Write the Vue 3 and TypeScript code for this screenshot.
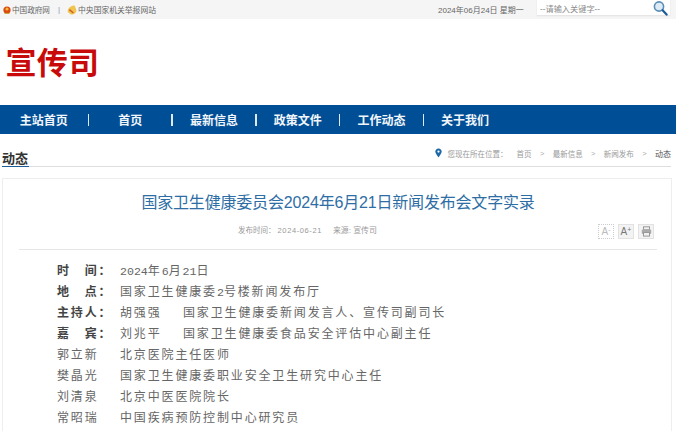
<script setup lang="ts">
const navItems: string[] = ['主站首页', '首页', '最新信息', '政策文件', '工作动态', '关于我们']
const crumbs: string[] = ['首页', '最新信息', '新闻发布']
interface Row { label: string; bold: boolean; value: string; extra?: string }
const rows: Row[] = [
  { label: '时　间：', bold: true, value: '2024年6月21日' },
  { label: '地　点：', bold: true, value: '国家卫生健康委2号楼新闻发布厅' },
  { label: '主持人：', bold: true, value: '胡强强', extra: '国家卫生健康委新闻发言人、宣传司副司长' },
  { label: '嘉　宾：', bold: true, value: '刘兆平', extra: '国家卫生健康委食品安全评估中心副主任' },
  { label: '郭立新', bold: false, value: '北京医院主任医师' },
  { label: '樊晶光', bold: false, value: '国家卫生健康委职业安全卫生研究中心主任' },
  { label: '刘清泉', bold: false, value: '北京中医医院院长' },
  { label: '常昭瑞', bold: false, value: '中国疾病预防控制中心研究员' },
]
const split = (s: string): string[] => s.match(/\d+|\D+/g) ?? []
const isNum = (s: string): boolean => /^\d/.test(s)
</script>

<template>
  <div class="page">
    <header class="topbar">
      <div class="top-links">
        <svg class="emblem" width="8" height="10" viewBox="0 0 8 10"><circle cx="4" cy="5" r="3.6" fill="#d9480f" /><circle cx="4" cy="4" r="1.6" fill="#f5b63c" /><path d="M1.5 8.4 H6.5" stroke="#c8a030" stroke-width="1" /></svg>
        <a class="top-link">中国政府网</a>
        <span class="top-sep">|</span>
        <svg class="emblem2" width="10" height="10" viewBox="0 0 10 10"><path d="M0.6 7 C0.6 3 4 0.6 7.6 0.6 L9.4 5 C9.4 8 7 9.6 4 9.6 Z" fill="#efc44f" /><path d="M2.4 4.6 L6.4 8" stroke="#cf5a2a" stroke-width="1.4" /></svg>
        <a class="top-link wide">中央国家机关举报网站</a>
      </div>
      <div class="top-right">
        <span class="date">2024年06月24日 星期一</span>
        <div class="search">
          <span class="placeholder">--请输入关键字--</span>
          <svg width="15" height="16" viewBox="0 0 15 16"><circle cx="6" cy="6.5" r="4.6" fill="#dcebf5" stroke="#5b8db5" stroke-width="1.6" /><path d="M9.6 10.2 L13.6 14.6" stroke="#1d5c94" stroke-width="2.2" stroke-linecap="round" /></svg>
        </div>
      </div>
    </header>

    <div class="brand"><h1>宣传司</h1></div>

    <nav class="nav">
      <template v-for="(item, i) in navItems" :key="item">
        <a class="nav-item" :class="{ first: i === 0 }">{{ item }}</a>
        <span v-if="i < navItems.length - 1" class="nav-sep"></span>
      </template>
    </nav>

    <div class="section-head">
      <h2>动态</h2>
      <div class="crumbs">
        <svg width="7" height="10" viewBox="0 0 8 11"><path d="M4 0.4 C1.8 0.4 0.4 2 0.4 3.9 C0.4 6.4 4 10.6 4 10.6 C4 10.6 7.6 6.4 7.6 3.9 C7.6 2 6.2 0.4 4 0.4 Z" fill="#1d69a8" /><circle cx="4" cy="3.8" r="1.3" fill="#fff" /></svg>
        <span class="crumb-lead">您现在所在位置：</span>
        <template v-for="c in crumbs" :key="c">
          <span class="crumb">{{ c }}</span>
          <span class="crumb-arrow">&gt;</span>
        </template>
        <span class="crumb current">动态</span>
      </div>
    </div>

    <main class="card">
      <h3 class="title">国家卫生健康委员会2024年6月21日新闻发布会文字实录</h3>
      <div class="meta-row">
        <div class="meta">
          <span>发布时间： <span class="meta-date">2024-06-21</span></span>
          <span class="meta-source">来源: 宣传司</span>
        </div>
        <div class="tools">
          <span class="tool off">A<sup>-</sup></span>
          <span class="tool">A<sup>+</sup></span>
          <span class="tool">
            <svg width="11" height="11" viewBox="0 0 11 11"><rect x="2.5" y="0.8" width="6" height="3" fill="none" stroke="#999" /><rect x="0.8" y="3.5" width="9.4" height="4.6" rx="1" fill="#aaa" /><rect x="2.5" y="6.5" width="6" height="3.6" fill="#f1f1f1" stroke="#999" /></svg>
          </span>
        </div>
      </div>
      <div class="content">
        <p v-for="r in rows" :key="r.label" class="row">
          <span class="label" :class="{ bold: r.bold }">{{ r.label }}</span>
          <span class="value"><span v-for="(s, i) in split(r.value)" :key="i" :class="{ num: isNum(s) }">{{ s }}</span></span>
          <span v-if="r.extra" class="extra">{{ r.extra }}</span>
        </p>
      </div>
    </main>
  </div>
</template>

<style>
html, body { margin: 0; overflow: hidden; background: #fff; }
</style>

<style scoped>
.page {
  width: 676px;
  height: 431px;
  overflow: hidden;
  font-family: "Liberation Sans", "Noto Sans CJK SC", sans-serif;
  color: #555;
}
.topbar {
  height: 19px;
  background: #f5f5f5;
  display: flex;
  justify-content: space-between;
  align-items: center;
}
.top-links { display: flex; align-items: center; padding-left: 3px; }
.emblem { margin-right: 1px; }
.top-link { font-size: 7.6px; color: #666; }
.top-link.wide { font-size: 7.8px; }
.top-sep { font-size: 8px; color: #8a9bb0; margin: 0 8px 0 8px; }
.emblem2 { margin: 0 1px 0 -1px; }
.top-right { display: flex; align-items: center; height: 100%; padding-right: 6px; }
.date { font-size: 8px; color: #666; width: 99px; }
.search {
  width: 133px;
  height: 16px;
  margin-bottom: 3px;
  box-sizing: border-box;
  background: #fff;
  border-bottom: 1px solid #e6e6e6;
  box-shadow: 0 0 1px #ddd;
  display: flex;
  align-items: center;
  justify-content: space-between;
  padding: 0 2px 0 3px;
}
.placeholder { font-size: 8.2px; color: #8c8c8c; }
.brand { height: 86px; box-sizing: border-box; padding: 27px 0 0 5.5px; }
.brand h1 {
  margin: 0;
  font-size: 31px;
  line-height: 36px;
  font-weight: 700;
  color: #c80a0a;
  letter-spacing: 0.3px;
}
.nav {
  height: 29px;
  background: #004f96;
  display: flex;
  align-items: center;
  padding-left: 5.6px;
}
.nav-item {
  width: 82.2px;
  box-sizing: border-box;
  text-align: center;
  font-size: 12px;
  font-weight: 700;
  color: #f2f6fa;
  flex: none;
}
.nav-item.first { padding-right: 6px; }
.nav-sep {
  width: 1.5px;
  height: 12px;
  background: #dfe9f2;
  flex: none;
}
.section-head {
  height: 33px;
  box-sizing: border-box;
  margin: 0 5px 0 2px;
  border-bottom: 1px solid #dedede;
  display: flex;
  justify-content: space-between;
  align-items: flex-end;
}
.section-head h2 {
  margin: 0 0 -1px;
  height: 16px;
  line-height: 15px;
  box-sizing: border-box;
  font-size: 13px;
  font-weight: 700;
  color: #333;
  border-bottom: 1px solid #1d5c94;
  width: 27px;
}
.crumbs {
  display: flex;
  align-items: center;
  height: 26px;
  font-size: 7.5px;
  color: #9a9a9a;
  margin-bottom: 0;
}
.crumb-lead { margin-left: 5px; margin-right: 9px; font-size: 7.5px; letter-spacing: 0; }
.crumb { white-space: nowrap; }
.crumb-arrow { margin: 0 8.4px 0 8.4px; color: #aaa; }
.crumb.current { color: #555; font-size: 8px; }
.card {
  margin: 11px 4px 0 2px;
  border: 1px solid #eee;
  border-bottom: none;
  padding: 0 14px 0 16px;
  height: 300px;
}
.title {
  margin: 0;
  padding-top: 14px;
  font-size: 16px;
  line-height: 20px;
  font-weight: 400;
  text-align: center;
  color: #2e6ea5;
  letter-spacing: -0.18px;
}
.meta-row {
  margin-top: 11px;
  height: 26px;
  box-sizing: border-box;
  border-bottom: 1px solid #e6e6e6;
  display: flex;
  position: relative;
  padding-left: 219px;
}
.meta {
  display: flex;
  gap: 11px;
  padding-top: 1px;
  font-size: 7.5px;
  line-height: 11px;
  color: #999;
}
.meta-date { letter-spacing: 0.6px; }
.meta-source { font-size: 7.9px; }
.tools {
  position: absolute;
  right: 3px;
  top: 0;
  display: flex;
  gap: 4px;
}
.tool {
  width: 16px;
  height: 15px;
  box-sizing: border-box;
  display: flex;
  align-items: center;
  justify-content: center;
  background: #f3f3f3;
  border: 1px solid #e2e2e2;
  font-size: 10px;
  color: #777;
}
.tool sup { font-size: 7px; line-height: 1; margin-top: -4px; }
.tool.off { background: #fff; border: 1px dotted #ccc; color: #bbb; }
.content { padding: 11px 0 0 38px; }
.row {
  margin: 0;
  height: 21px;
  line-height: 21px;
  font-size: 12px;
  letter-spacing: 1.85px;
  white-space: nowrap;
  color: #666;
  display: flex;
}
.label { width: 63px; flex: none; color: #666; }
.label.bold { font-weight: 700; color: #444; }
.value { width: 63px; flex: none; white-space: nowrap; }
.num { font-family: "Liberation Mono", monospace; font-size: 11.6px; letter-spacing: 0; }
.extra { flex: none; }
</style>
